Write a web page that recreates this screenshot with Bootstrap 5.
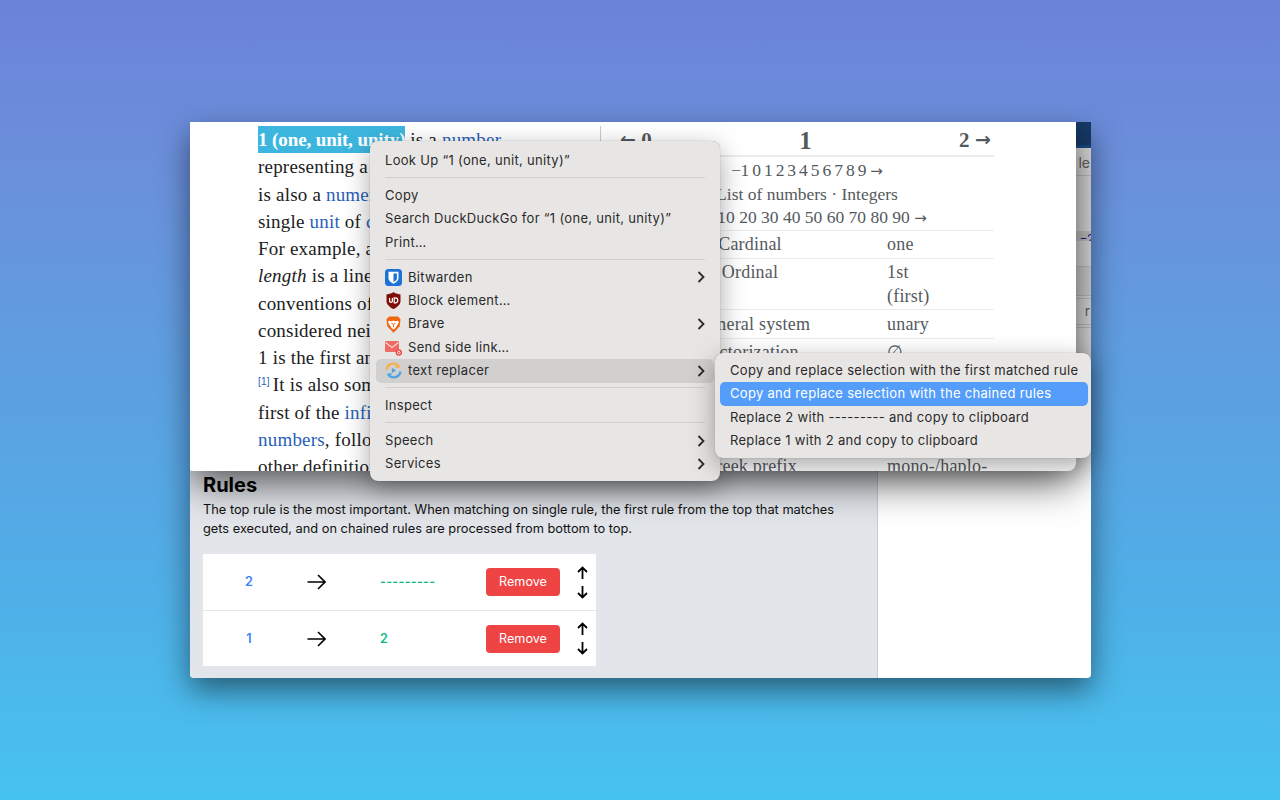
<!DOCTYPE html>
<html lang="en">
<head>
  <meta charset="UTF-8">
  <title>text replacer</title>
  <link href="https://cdn.jsdelivr.net/npm/bootstrap@5.3.3/dist/css/bootstrap.min.css" rel="stylesheet">
  <script src="https://cdn.jsdelivr.net/npm/bootstrap@5.3.3/dist/js/bootstrap.bundle.min.js"></script>
  <style>
    html, body { margin: 0; width: 1280px; height: 800px; overflow: hidden; }
    .desk { position: relative; width: 1280px; height: 800px; background: linear-gradient(180deg, #6b83d9 0%, #6b8fdb 20%, #4fb0e8 75%, #47c3ef 100%); font-family: Inter, "Noto Sans", sans-serif; }

    /* options page window, lies under the popup */
    .appwin { position: absolute; left: 190px; top: 122px; width: 901px; height: 556px; box-shadow: 0 12px 30px rgba(0,0,0,.5); border-radius: 0 0 4px 4px; overflow: hidden; background: #fff; }
    .rules-pane { position: absolute; left: 0; top: 349px; width: 688px; height: 207px; background: #e2e5ea; border-right: 1px solid #c9ccd1; padding: 1px 13px 0; color: #000; }
    .rules-title { font-size: 20px; font-weight: 700; line-height: 20px; margin: 3px 0 5px; }
    .rules-text { font-size: 12.8px; line-height: 19px; width: 650px; margin: 0 0 16px; color: #111; }
    .rule-list { width: 393px; background: #fff; }
    .rule-line { height: 56px; }
    .rule-line + .rule-line { border-top: 1px solid #e2e5ea; }
    .rule-from { width: 92px; padding-top: 1px; font-size: 12.6px; font-weight: 600; color: #3b82f6; text-align: center; }
    .rule-arrow { width: 85px; padding-right: 43px; }
    .rule-to { width: 106px; padding-top: 1px; font-size: 12.6px; font-weight: 600; color: #10b981; letter-spacing: .3px; }
    .rule-btn { width: 74px; height: 28px; background: #ef4444; color: #fff; border: 0; border-radius: 4px; font-size: 12.6px; padding: 1px 0 0; }
    .rule-move { width: 36px; padding-left: 8px; gap: 3px; }

    /* right edge of the window behind the popup */
    .edge-strip { position: absolute; left: 886px; top: 0; width: 15px; height: 270px; background: #e4e4e4; font-size: 14px; color: #666; overflow: hidden; }
    .edge-head { height: 26px; background: #163c6a; border-bottom: 3px solid #1b4c8c; }
    .edge-row { border-bottom: 1px solid #c6c6c6; text-align: right; white-space: nowrap; padding-right: 1px; }
    .edge-link { height: 10px; background: #ccc; color: #1a1a9c; line-height: 15px; font-size: 12px; text-decoration: underline; overflow: hidden; white-space: nowrap; }

    /* browser popup with the article */
    .popwin { position: absolute; left: 0; top: 0; width: 886px; height: 349px; background: #fff; border-radius: 0 0 8px 2px; box-shadow: 0 10px 40px rgba(0,0,0,.7); overflow: hidden; font-family: "Liberation Serif", serif; }
    .article { width: 411px; margin-top: 4px; padding-left: 68px; border-right: 1px solid #c8ccd1; font-size: 19px; line-height: 27.25px; color: #202122; white-space: nowrap; overflow: hidden; letter-spacing: .2px; }
    .article a { color: #2a5fb8; text-decoration: none; }
    .picked { background: #3db6df; color: #fff; font-weight: 700; display: inline-block; height: 27px; letter-spacing: -.1px; }
    .refnum { font-family: "Liberation Sans", sans-serif; font-size: 10px; vertical-align: 6px; line-height: 0; margin-right: 3px; }
    .infobox { width: 374px; margin-left: 19px; color: #54595d; font-size: 18px; line-height: 23.5px; letter-spacing: .2px; }
    .info-nav { height: 35px; font-weight: 700; font-size: 21px; line-height: 36px; border-bottom: 2px solid #eaecf0; }
    .info-nav .big { font-size: 25px; line-height: 38px; }
    .arrow-glyph { font-family: "DejaVu Sans", sans-serif; font-size: 19px; font-weight: 700; letter-spacing: 0; line-height: 1; vertical-align: 1px; }
    .arrow-next { margin-right: 3px; }
    .arrow-small { font-family: "DejaVu Sans", sans-serif; font-size: 15px; line-height: 1; }
    .info-seq { padding: 2px 0 1px; text-align: center; border-bottom: 1px solid #eaecf0; height: 74px; white-space: nowrap; font-size: 17.5px; letter-spacing: 0; }
    .seq-tight { letter-spacing: -.7px; }
    .info-row { border-bottom: 1px solid #eaecf0; padding: 2px 0 1px; min-height: 28px; }
    .info-row-roomy { min-height: 29px; padding-top: 3px; }
    .info-key { width: 260px; text-align: center; flex: none; }
    .info-val { padding-left: 7px; }

    /* context menus */
    .ctxmenu { position: absolute; background: #e8e6e4; border-radius: 8px; box-shadow: 0 0 1px rgba(0,0,0,.4), 0 8px 26px rgba(0,0,0,.35); font-size: 13px; color: #2a2a2a; letter-spacing: .31px; }
    .main-menu { left: 370px; top: 141px; width: 350px; height: 340px; padding: 7.8px 6px 0; }
    .sub-menu { left: 715px; top: 353px; width: 376px; height: 105px; padding: 5.8px 3px 5.5px 5px; }
    .ctxitem { height: 23.4px; line-height: 23.4px; padding: 0 9px; border-radius: 5px; white-space: nowrap; }
    .sub-menu .ctxitem { padding: 0 10px; }
    .ctxitem.has-icon { gap: 6px; }
    .ctxitem.hover { background: #d2d0cf; }
    .ctxitem.active { background: #549dfb; color: #fff; }
    .ctxsep { height: 1px; background: #d3d1cf; margin: 4.6px 9px 6px; }
    .menu-icon { width: 17px; height: 17px; flex: none; }
    .chev { margin-left: auto; margin-right: 0; }
  </style>
</head>
<body>
<div class="desk">
  <div class="appwin">
    <div class="rules-pane">
      <h1 class="rules-title">Rules</h1>
      <p class="rules-text">The top rule is the most important. When matching on single rule, the first rule from the top that matches gets executed, and on chained rules are processed from bottom to top.</p>
      <div class="rule-list">
        <div class="rule-line d-flex align-items-center">
          <div class="rule-from">2</div>
          <div class="rule-arrow d-flex justify-content-center">
            <svg width="19" height="16" viewBox="0 0 19 16" fill="none" stroke="#000" stroke-width="1.6"><path d="M0.5 8H18M11 1l7 7-7 7"/></svg>
          </div>
          <div class="rule-to">---------</div>
          <button class="rule-btn" type="button">Remove</button>
          <div class="rule-move d-flex flex-column align-items-center">
            <svg width="11" height="13" viewBox="0 0 11 13" fill="none" stroke="#000" stroke-width="1.8"><path d="M5.5 13V1.5M1 6l4.5-4.5L10 6"/></svg>
            <svg width="11" height="13" viewBox="0 0 11 13" fill="none" stroke="#000" stroke-width="1.8" class="mt-1"><path d="M5.5 0v11.5M1 7l4.5 4.5L10 7"/></svg>
          </div>
        </div>
        <div class="rule-line d-flex align-items-center">
          <div class="rule-from">1</div>
          <div class="rule-arrow d-flex justify-content-center">
            <svg width="19" height="16" viewBox="0 0 19 16" fill="none" stroke="#000" stroke-width="1.6"><path d="M0.5 8H18M11 1l7 7-7 7"/></svg>
          </div>
          <div class="rule-to">2</div>
          <button class="rule-btn" type="button">Remove</button>
          <div class="rule-move d-flex flex-column align-items-center">
            <svg width="11" height="13" viewBox="0 0 11 13" fill="none" stroke="#000" stroke-width="1.8"><path d="M5.5 13V1.5M1 6l4.5-4.5L10 6"/></svg>
            <svg width="11" height="13" viewBox="0 0 11 13" fill="none" stroke="#000" stroke-width="1.8" class="mt-1"><path d="M5.5 0v11.5M1 7l4.5 4.5L10 7"/></svg>
          </div>
        </div>
      </div>
    </div>
    <div class="edge-strip">
      <div class="edge-head"></div>
      <div class="edge-row" style="height:28px;line-height:29px">le</div>
      <div style="height:55px"></div>
      <div class="edge-link">&nbsp;−2</div>
      <div class="edge-row" style="height:26px"></div>
      <div class="edge-row" style="height:29px;background:#d9d9d9"></div>
      <div class="edge-row" style="height:3px"></div>
      <div class="edge-row" style="height:26px;line-height:24px">r</div>
      <div class="edge-row" style="height:3px"></div>
    </div>
    <div class="popwin d-flex">
      <div class="article">
        <span class="picked">1 (one, unit, unity)</span> is a <a href="#">number</a><br>
        representing a single or the only<br>
        is also a <a href="#">numerical digit</a><br>
        single <a href="#">unit</a> of <a href="#">counting</a><br>
        For example, a line segment of unit<br>
        <i>length</i> is a line segment of length<br>
        conventions of sign where zero<br>
        considered neither positive nor<br>
        1 is the first and smallest<br>
        <a href="#" class="refnum">[1]</a>It is also sometimes considered<br>
        first of the <a href="#">infinite sequence</a><br>
        <a href="#">numbers</a>, followed by 2<br>
        other definitions 1 is the second
      </div>
      <div class="infobox">
        <div class="info-nav d-flex justify-content-between">
          <span><span class="arrow-glyph">←</span> 0</span><span class="big">1</span><span>2 <span class="arrow-glyph arrow-next">→</span></span>
        </div>
        <div class="info-seq">
          <span class="seq-tight">−1 0 1 2 3 4 5 6 7 8 9</span> <span class="arrow-small">→</span><br>
          List of numbers · Integers<br>
          <span class="arrow-small">←</span> 0 10 20 30 40 50 60 70 80 90 <span class="arrow-small">→</span>
        </div>
        <div class="info-row d-flex"><div class="info-key">Cardinal</div><div class="info-val">one</div></div>
        <div class="info-row d-flex"><div class="info-key">Ordinal</div><div class="info-val">1st<br>(first)</div></div>
        <div class="info-row info-row-roomy d-flex"><div class="info-key">Numeral system</div><div class="info-val">unary</div></div>
        <div class="info-row d-flex"><div class="info-key">Factorization</div><div class="info-val">∅</div></div>
        <div class="info-row d-flex"><div class="info-key">Divisors</div><div class="info-val">1</div></div>
        <div class="info-row info-row-roomy d-flex"><div class="info-key">Greek numeral</div><div class="info-val">Α´</div></div>
        <div class="info-row d-flex"><div class="info-key">Roman numeral</div><div class="info-val">I, i</div></div>
        <div class="info-row info-row-roomy d-flex"><div class="info-key">Greek prefix</div><div class="info-val">mono-/haplo-</div></div>
      </div>
    </div>
  </div>

  <div class="ctxmenu main-menu">
    <div class="ctxitem">Look Up “1 (one, unit, unity)”</div>
    <div class="ctxsep"></div>
    <div class="ctxitem">Copy</div>
    <div class="ctxitem">Search DuckDuckGo for “1 (one, unit, unity)”</div>
    <div class="ctxitem">Print…</div>
    <div class="ctxsep"></div>
    <div class="ctxitem has-icon d-flex align-items-center">
      <svg class="menu-icon" viewBox="0 0 17 17"><rect width="17" height="17" rx="3.5" fill="#1d72d8"/><path d="M3.500 2.800h10v6.400c0 2.600-2.600 4.400-5 5.600-2.400-1.200-5-3-5-5.600z" fill="#fff"/><path d="M8.500 4.400h3.400v4.900c0 1.700-1.700 2.900-3.400 3.800z" fill="#1d72d8"/></svg>
      Bitwarden
      <svg class="chev" width="8" height="12" viewBox="0 0 8 12" fill="none" stroke="#2a2a2a" stroke-width="1.8"><path d="M1.500 1l5 5-5 5"/></svg>
    </div>
    <div class="ctxitem has-icon d-flex align-items-center">
      <svg class="menu-icon" viewBox="0 0 17 17"><path d="M8.500 0c1.800 1.400 3.800 2.100 7 2.400v6.800c0 3.300-3.700 6.400-7 7.800-3.300-1.400-7-4.500-7-7.800V2.400c3.200-.3 5.200-1 7-2.400z" fill="#800f0a"/><path d="M4.600 6v3c0 1.800 2.800 1.800 2.800 0V6M9.200 5.800v5h1.200c3.200 0 3.200-5 0-5z" fill="none" stroke="#fff" stroke-width="1.200"/></svg>
      Block element…
    </div>
    <div class="ctxitem has-icon d-flex align-items-center">
      <svg class="menu-icon" viewBox="0 0 17 17"><path d="M4 .5h9l2.500 2.700-.9 7.300-6.100 6.200-6.100-6.200-.9-7.300z" fill="#f3640f"/><path d="M3.800 4.800l2.800.4 1.900-.8 1.900.8 2.800-.4.700 1.700-1.900 3.100-1.500 2.400-2 1.600-2-1.600L5 9.600 3.100 6.500z" fill="#fff"/><path d="M6.400 7.300l2.100 1.100 2.100-1.100M8.500 8.400v2.800" stroke="#f3640f" stroke-width="1" fill="none"/></svg>
      Brave
      <svg class="chev" width="8" height="12" viewBox="0 0 8 12" fill="none" stroke="#2a2a2a" stroke-width="1.8"><path d="M1.500 1l5 5-5 5"/></svg>
    </div>
    <div class="ctxitem has-icon d-flex align-items-center">
      <svg class="menu-icon" viewBox="0 0 17 17"><rect y="2" width="14" height="11" rx="1" fill="#ef6a62"/><path d="M.5 3.500L7 8.500l6.500-5" fill="none" stroke="#f9d6d2" stroke-width="1.200"/><circle cx="13.800" cy="13.500" r="3.200" fill="#e8504c"/><circle cx="13.800" cy="13.500" r="1.300" fill="none" stroke="#fff" stroke-width=".8"/></svg>
      Send side link…
    </div>
    <div class="ctxitem has-icon hover d-flex align-items-center">
      <svg class="menu-icon" viewBox="0 0 17 17" fill="none"><path d="M1.500 7.500A7 7 0 0 1 13.800 4.200" stroke="#f5b04c" stroke-width="2.400"/><path d="M11.500 1.500l4 3.800-5 .7z" fill="#f5b04c"/><path d="M15.500 9.500A7 7 0 0 1 3.200 12.800" stroke="#4ea5e0" stroke-width="2.400"/><path d="M5.500 15.500l-4-3.800 5-.7z" fill="#4ea5e0"/><path d="M6.800 5.800l4.200 2.700-4.200 2.700z" fill="#4ea5e0"/></svg>
      text replacer
      <svg class="chev" width="8" height="12" viewBox="0 0 8 12" fill="none" stroke="#2a2a2a" stroke-width="1.8"><path d="M1.500 1l5 5-5 5"/></svg>
    </div>
    <div class="ctxsep"></div>
    <div class="ctxitem">Inspect</div>
    <div class="ctxsep"></div>
    <div class="ctxitem d-flex align-items-center">
      Speech
      <svg class="chev" width="8" height="12" viewBox="0 0 8 12" fill="none" stroke="#2a2a2a" stroke-width="1.8"><path d="M1.500 1l5 5-5 5"/></svg>
    </div>
    <div class="ctxitem d-flex align-items-center">
      Services
      <svg class="chev" width="8" height="12" viewBox="0 0 8 12" fill="none" stroke="#2a2a2a" stroke-width="1.8"><path d="M1.500 1l5 5-5 5"/></svg>
    </div>
  </div>

  <div class="ctxmenu sub-menu">
    <div class="ctxitem">Copy and replace selection with the first matched rule</div>
    <div class="ctxitem active">Copy and replace selection with the chained rules</div>
    <div class="ctxitem">Replace 2 with --------- and copy to clipboard</div>
    <div class="ctxitem">Replace 1 with 2 and copy to clipboard</div>
  </div>
</div>
</body>
</html>
